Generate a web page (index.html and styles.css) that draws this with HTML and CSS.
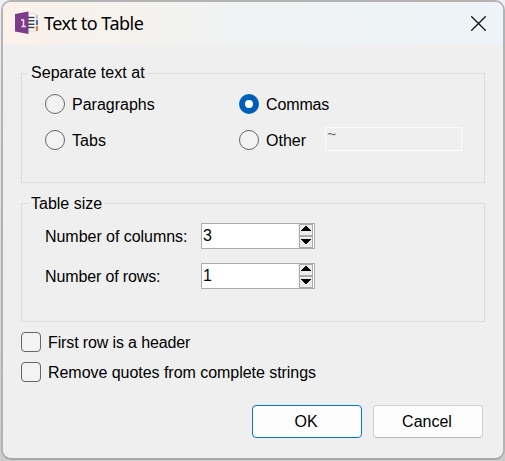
FILE: index.html
```html
<!DOCTYPE html>
<html lang="en">
<head>
<meta charset="utf-8">
<title>Text to Table</title>
<link rel="stylesheet" href="styles.css">
</head>
<body>
<main class="dialog">
  <header class="titlebar">
    <svg class="app-icon" width="24" height="24" viewBox="0 0 24 24">
      <path fill="#fff" stroke="#d5cbd6" stroke-width=".7" d="M12 3h9v17h-9z"/>
      <path fill="#3e72ba" d="M21 9h2v5h-2z"/>
      <path fill="#e98131" d="M21 15h2v5h-2z"/>
      <path fill="#c9bfca" d="M21 4h2v4h-2z"/>
      <path stroke="#46404a" stroke-width="1.5" d="M13 6.5h6.5M13 9.8h6.5M13 13.2h6.5M13 16.5h6.5"/>
      <path fill="#7d3c88" d="M0 3 13.5 .5v22.5L0 20.5z"/>
      <path fill="none" stroke="#eee0f0" stroke-width="1.5" d="M6 9h2.5v6M6.5 15.5h4.500"/>
    </svg>
    <h1 class="title">Text to Table</h1>
    <svg class="close" width="15" height="15" viewBox="0 0 15 15"><path fill="none" stroke="#111" stroke-width="1.3" d="M.3.3l14.4 14.4M14.7.3L.3 14.7"/></svg>
  </header>
  <section class="group separators">
    <h2 class="legend wide">Separate text at</h2>
    <div class="choices">
      <div class="choice"><span class="radio"></span><span class="choice-label">Paragraphs</span></div>
      <div class="choice"><span class="radio checked"></span><span class="choice-label snug">Commas</span></div>
      <div class="choice"><span class="radio"></span><span class="choice-label wide">Tabs</span></div>
      <div class="choice"><span class="radio"></span><span class="choice-label">Other</span><span class="custom">~</span></div>
    </div>
  </section>
  <section class="group size">
    <h2 class="legend">Table size</h2>
    <div class="number-row"><span class="number-label long">Number of columns:</span>
      <div class="spinner"><span>3</span><div class="arrows"><svg class="arrow" viewBox="0 0 12 10"><path d="M5 1h2v1h1v1h1v1h1v1h1v1H1V5h1V4h1V3h1V2h1z"/></svg><svg class="arrow" viewBox="0 0 12 10"><path d="M1 2h10v1h-1v1H9v1H8v1H7v1H5V6H4V5H3V4H2V3H1z"/></svg></div></div>
    </div>
    <div class="number-row"><span class="number-label snug">Number of rows:</span>
      <div class="spinner"><span>1</span><div class="arrows"><svg class="arrow" viewBox="0 0 12 10"><path d="M5 1h2v1h1v1h1v1h1v1h1v1H1V5h1V4h1V3h1V2h1z"/></svg><svg class="arrow" viewBox="0 0 12 10"><path d="M1 2h10v1h-1v1H9v1H8v1H7v1H5V6H4V5H3V4H2V3H1z"/></svg></div></div>
    </div>
  </section>
  <div class="options">
    <div class="option"><span class="checkbox"></span><span class="snug">First row is a header</span></div>
    <div class="option"><span class="checkbox"></span><span class="long">Remove quotes from complete strings</span></div>
  </div>
  <footer class="actions">
    <button class="button primary">OK</button>
    <button class="button">Cancel</button>
  </footer>
</main>
</body>
</html>
```
FILE: styles.css
```css
* { box-sizing: border-box; }
body {
  margin: 0;
  height: 461px;
  overflow: hidden;
  padding: 0 0 0 1px;
  background: linear-gradient(#f0f0f0, #cbcbcb);
  color: #000;
  font: 16px/20px "Liberation Sans", sans-serif;
}
.dialog {
  width: 504px;
  height: 460px;
  border: 2px solid #b3b3b3;
  border-bottom-color: #a5a5a5;
  border-radius: 10px;
  background: #efefef;
  overflow: hidden;
}
.titlebar {
  display: flex;
  align-items: center;
  height: 43px;
  padding: 0 17px 0 12px;
  background: linear-gradient(90deg, #faf1ea 0, #f6f2ed 22%, #f0f3f3 45%, #edf3f8 100%);
}
.app-icon { margin-top: -1px; }
.title {
  margin: -1px auto 0 5px;
  font: 18px/24px "Noto Sans", sans-serif;
  letter-spacing: -.5px;
}
.close { margin-top: -1px; }
.group {
  margin: 28px 18px 0 18px;
  border: 1px solid #dcdcdc;
}
.separators { height: 110px; }
.size { height: 119px; margin-top: 20px; }
.legend {
  width: max-content;
  height: 20px;
  margin: -11px 0 0 6px;
  padding: 0 3px;
  background: #efefef;
  font-size: 16px;
  font-weight: normal;
}
.wide { letter-spacing: .05px; }
.snug { letter-spacing: -.13px; }
.long { letter-spacing: -.04px; }
.choices {
  display: grid;
  grid-template-columns: 194px 1fr;
  grid-auto-rows: 36px;
  padding: 3px 22px 0 23px;
}
.choice { display: flex; align-items: center; }
.choice-label { padding-top: 2px; }
.radio {
  width: 20px;
  height: 20px;
  margin-right: 7px;
  border: 1px solid #666;
  border-radius: 50%;
  background: #f3f3f3;
}
.radio.checked { border: 6px solid #005fb8; background: #fff; }
.custom {
  width: 137px;
  height: 24px;
  margin: -2px 0 0 auto;
  padding-left: 1px;
  border: 1px solid #fbfbfb;
  color: #6d6d6d;
  font-size: 16px;
  line-height: 14px;
}
.number-row {
  display: flex;
  align-items: center;
  height: 40px;
  padding-left: 23px;
}
.size .legend { margin: -10px 0 2px 6px; }
.number-label { width: 156px; padding-top: 1px; }
.spinner {
  display: flex;
  align-items: center;
  justify-content: space-between;
  width: 114px;
  height: 26px;
  padding: 0 1px;
  border: 1px solid #abadb3;
  background: #fff;
}
.arrows { width: 15px; height: 24px; padding-left: 1px; background: #f0f0f0; }
.arrow {
  display: block;
  width: 14px;
  height: 12px;
  border: 1px solid #ababab;
  background: #ececec;
}
.options { padding: 5px 0 0 18px; }
.option { display: flex; align-items: center; height: 30px; }
.option span:last-child { padding-top: 1px; }
.checkbox {
  width: 20px;
  height: 20px;
  margin-right: 7px;
  border: 1px solid #666;
  border-radius: 4px;
  background: #f3f3f3;
}
.actions { display: flex; gap: 11px; justify-content: flex-end; padding: 18px 20px 0 0; }
.button {
  width: 110px;
  height: 33px;
  padding: 0 2px 0 0;
  border: 1px solid #d0d0d0;
  border-bottom-color: #bababa;
  border-radius: 4px;
  background: #fdfdfd;
  color: #000;
  font: inherit;
}
.button.primary { border-color: #0078d4; }
```
